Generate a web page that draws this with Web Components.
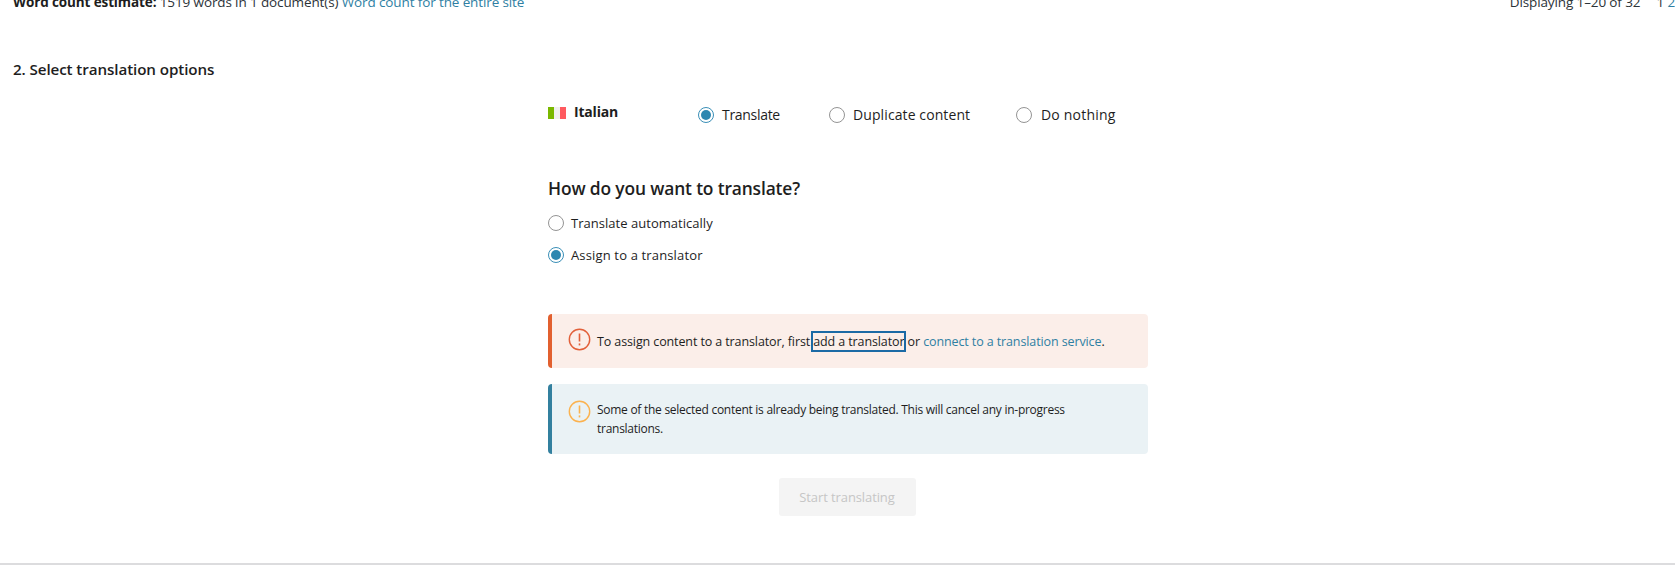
<!DOCTYPE html>
<html lang="en">
<head>
<meta charset="utf-8">
<title>Select translation options</title>
<style>
  html, body { margin: 0; padding: 0; height: 566px; overflow: hidden; background: #fff; }
  body { font-family: "Open Sans", "Noto Sans", sans-serif; color: #1e1e1e; font-size: 13px; }
</style>
</head>
<body>
<template id="radio-tpl">
  <style>
    :host { display: inline-flex; align-items: center; gap: var(--radio-gap, 7px); font-size: var(--radio-size, 13px); letter-spacing: var(--radio-ls, 0); color: #1e1e1e; line-height: 18px; white-space: nowrap; }
    .dot { box-sizing: border-box; width: 16px; height: 16px; border-radius: 50%; border: 1px solid #949494; background: #fff; flex: none; position: relative; }
    :host([checked]) .dot { border: 1.5px solid #3a8fb7; }
    :host([checked]) .dot::after { content: ""; position: absolute; inset: 2px; border-radius: 50%; background: #2e87b0; }
  </style>
  <span class="dot"></span><slot></slot>
</template>

<template id="notice-tpl">
  <style>
    :host { display: flex; box-sizing: border-box; align-items: flex-start; gap: 6px; padding: 15px 30px 15px 16px; border-left: 4px solid var(--edge); border-radius: 4px; background: var(--bg); font-size: var(--notice-size, 12px); letter-spacing: var(--notice-ls, -0.27px); line-height: 19px; color: #1e1e1e; }
    svg { width: 23px; height: 23px; flex: none; margin-top: var(--icon-top, -1px); color: var(--icon); }
    .msg { flex: 1; min-width: 0; padding-top: var(--msg-top, 3px); }
    ::slotted(a) { color: #2f7fa3; text-decoration: none; }
    ::slotted(a.focus) { color: #1e1e1e; outline: 2px solid #1b6aa5; outline-offset: 0; }
  </style>
  <svg viewBox="0 0 23 23" fill="none" stroke="currentColor">
    <circle cx="11.5" cy="11.5" r="10.2" stroke-width="1.4"/>
    <path d="M11.5 5.5v8" stroke-width="1.6"/>
    <path d="M11.5 15.4v2" stroke-width="1.6"/>
  </svg>
  <div class="msg"><slot></slot></div>
</template>

<template id="stats-tpl">
  <style>
    :host { display: flex; justify-content: space-between; height: 10px; padding: 0 0 0 13px; font-size: 13.5px; line-height: 16px; letter-spacing: -0.12px; color: #2c3338; white-space: nowrap; }
    .row { margin-top: -6px; }
    b { font-weight: 700; color: #1e1e1e; }
    a { color: #2f7fa3; text-decoration: none; }
    .pages { margin-left: 16px; }
  </style>
  <div class="row"><b>Word count estimate:</b> 1519 words in 1 document(s) <a>Word count for the entire site</a></div>
  <div class="row">Displaying 1–20 of 32<span class="pages">1 <a>2</a></span></div>
</template>

<template id="language-tpl">
  <style>
    :host { display: flex; align-items: flex-start; height: 79px; font-size: 14px; }
    .lang { display: flex; align-items: center; gap: 8px; width: 150px; height: 18px; font-weight: 700; letter-spacing: -0.2px; color: #1e1e1e; padding-top: 5px; }
    .flag { display: flex; width: 18px; height: 12px; flex: none; margin-top: 4px; }
    .flag i { flex: 1; }
    .opts { display: flex; padding-top: 9px; }
    .opts ::slotted(*) { --radio-size: 14px; --radio-gap: 8px; }
  </style>
  <div class="lang">
    <span class="flag"><i style="background:#7ab800"></i><i style="background:#f0f0f0"></i><i style="background:#ff5a5f"></i></span>
    <span>Italian</span>
  </div>
  <div class="opts"><slot></slot></div>
</template>

<template id="options-tpl">
  <style>
    :host { display: block; box-sizing: border-box; height: 566px; }
    h2 { margin: 0; padding: 49px 0 0 13px; font-size: 15.2px; line-height: 20px; font-weight: 600; letter-spacing: -0.1px; color: #1e1e1e; }
    .col { width: 600px; margin: 18px 0 0 548px; display: flex; flex-direction: column; }
    h3 { margin: 0; font-size: 17.4px; line-height: 24px; font-weight: 600; letter-spacing: -0.15px; color: #1e1e1e; }
    .choices { display: flex; flex-direction: column; gap: 14px; margin-top: 14px; height: 100px; }
    .notices { display: flex; flex-direction: column; gap: 16px; }
    .actions { display: flex; justify-content: center; margin-top: 24px; padding-right: 2px; }
    button { width: 137px; height: 38px; border: 0; border-radius: 3px; background: #f4f4f4; color: #c6c6c6; font: inherit; font-size: 13px; letter-spacing: -0.1px; padding: 0; }
  </style>
  <h2>2. Select translation options</h2>
  <div class="col">
    <slot name="language"></slot>
    <h3>How do you want to translate?</h3>
    <div class="choices"><slot name="choice"></slot></div>
    <div class="notices"><slot name="notice"></slot></div>
    <div class="actions"><button disabled>Start translating</button></div>
  </div>
</template>

<template id="page-tpl">
  <style>
    :host { display: block; height: 566px; position: relative; overflow: hidden; }
    .rule { position: absolute; left: 0; right: 0; bottom: 1px; height: 2px; background: #dcdcde; }
  </style>
  <slot></slot>
  <div class="rule"></div>
</template>

<wizard-page>
  <word-stats></word-stats>
  <translation-options>
    <language-row slot="language">
      <ui-radio checked style="width:131px;--radio-ls:-0.3px">Translate</ui-radio>
      <ui-radio style="width:187px;--radio-ls:0.1px">Duplicate content</ui-radio>
      <ui-radio style="--radio-gap:9px;--radio-ls:0.2px">Do nothing</ui-radio>
    </language-row>
    <ui-radio slot="choice" style="--radio-ls:0.03px">Translate automatically</ui-radio>
    <ui-radio slot="choice" checked style="--radio-ls:0.15px">Assign to a translator</ui-radio>
    <ui-notice slot="notice" style="--edge:#e2602f;--bg:#fbeee9;--icon:#e2603a;height:54px;--notice-size:12.5px;--notice-ls:-0.11px">To assign content to a translator, first <a class="focus">add a translator</a> or <a>connect to a translation service</a>.</ui-notice>
    <ui-notice slot="notice" style="--edge:#33809f;--bg:#eaf2f5;--icon:#fbb24f;height:70px;--icon-top:1px;--msg-top:1px">Some of the selected content is already being translated. This will cancel any in-progress translations.</ui-notice>
  </translation-options>
</wizard-page>

<script>
  const fromTemplate = (id) => class extends HTMLElement {
    constructor() {
      super();
      this.attachShadow({ mode: "open" });
      this.shadowRoot.appendChild(document.getElementById(id).content.cloneNode(true));
    }
  };

  customElements.define("ui-radio", fromTemplate("radio-tpl"));
  customElements.define("ui-notice", fromTemplate("notice-tpl"));
  customElements.define("word-stats", fromTemplate("stats-tpl"));
  customElements.define("language-row", fromTemplate("language-tpl"));
  customElements.define("translation-options", fromTemplate("options-tpl"));
  customElements.define("wizard-page", fromTemplate("page-tpl"));
</script>
</body>
</html>
